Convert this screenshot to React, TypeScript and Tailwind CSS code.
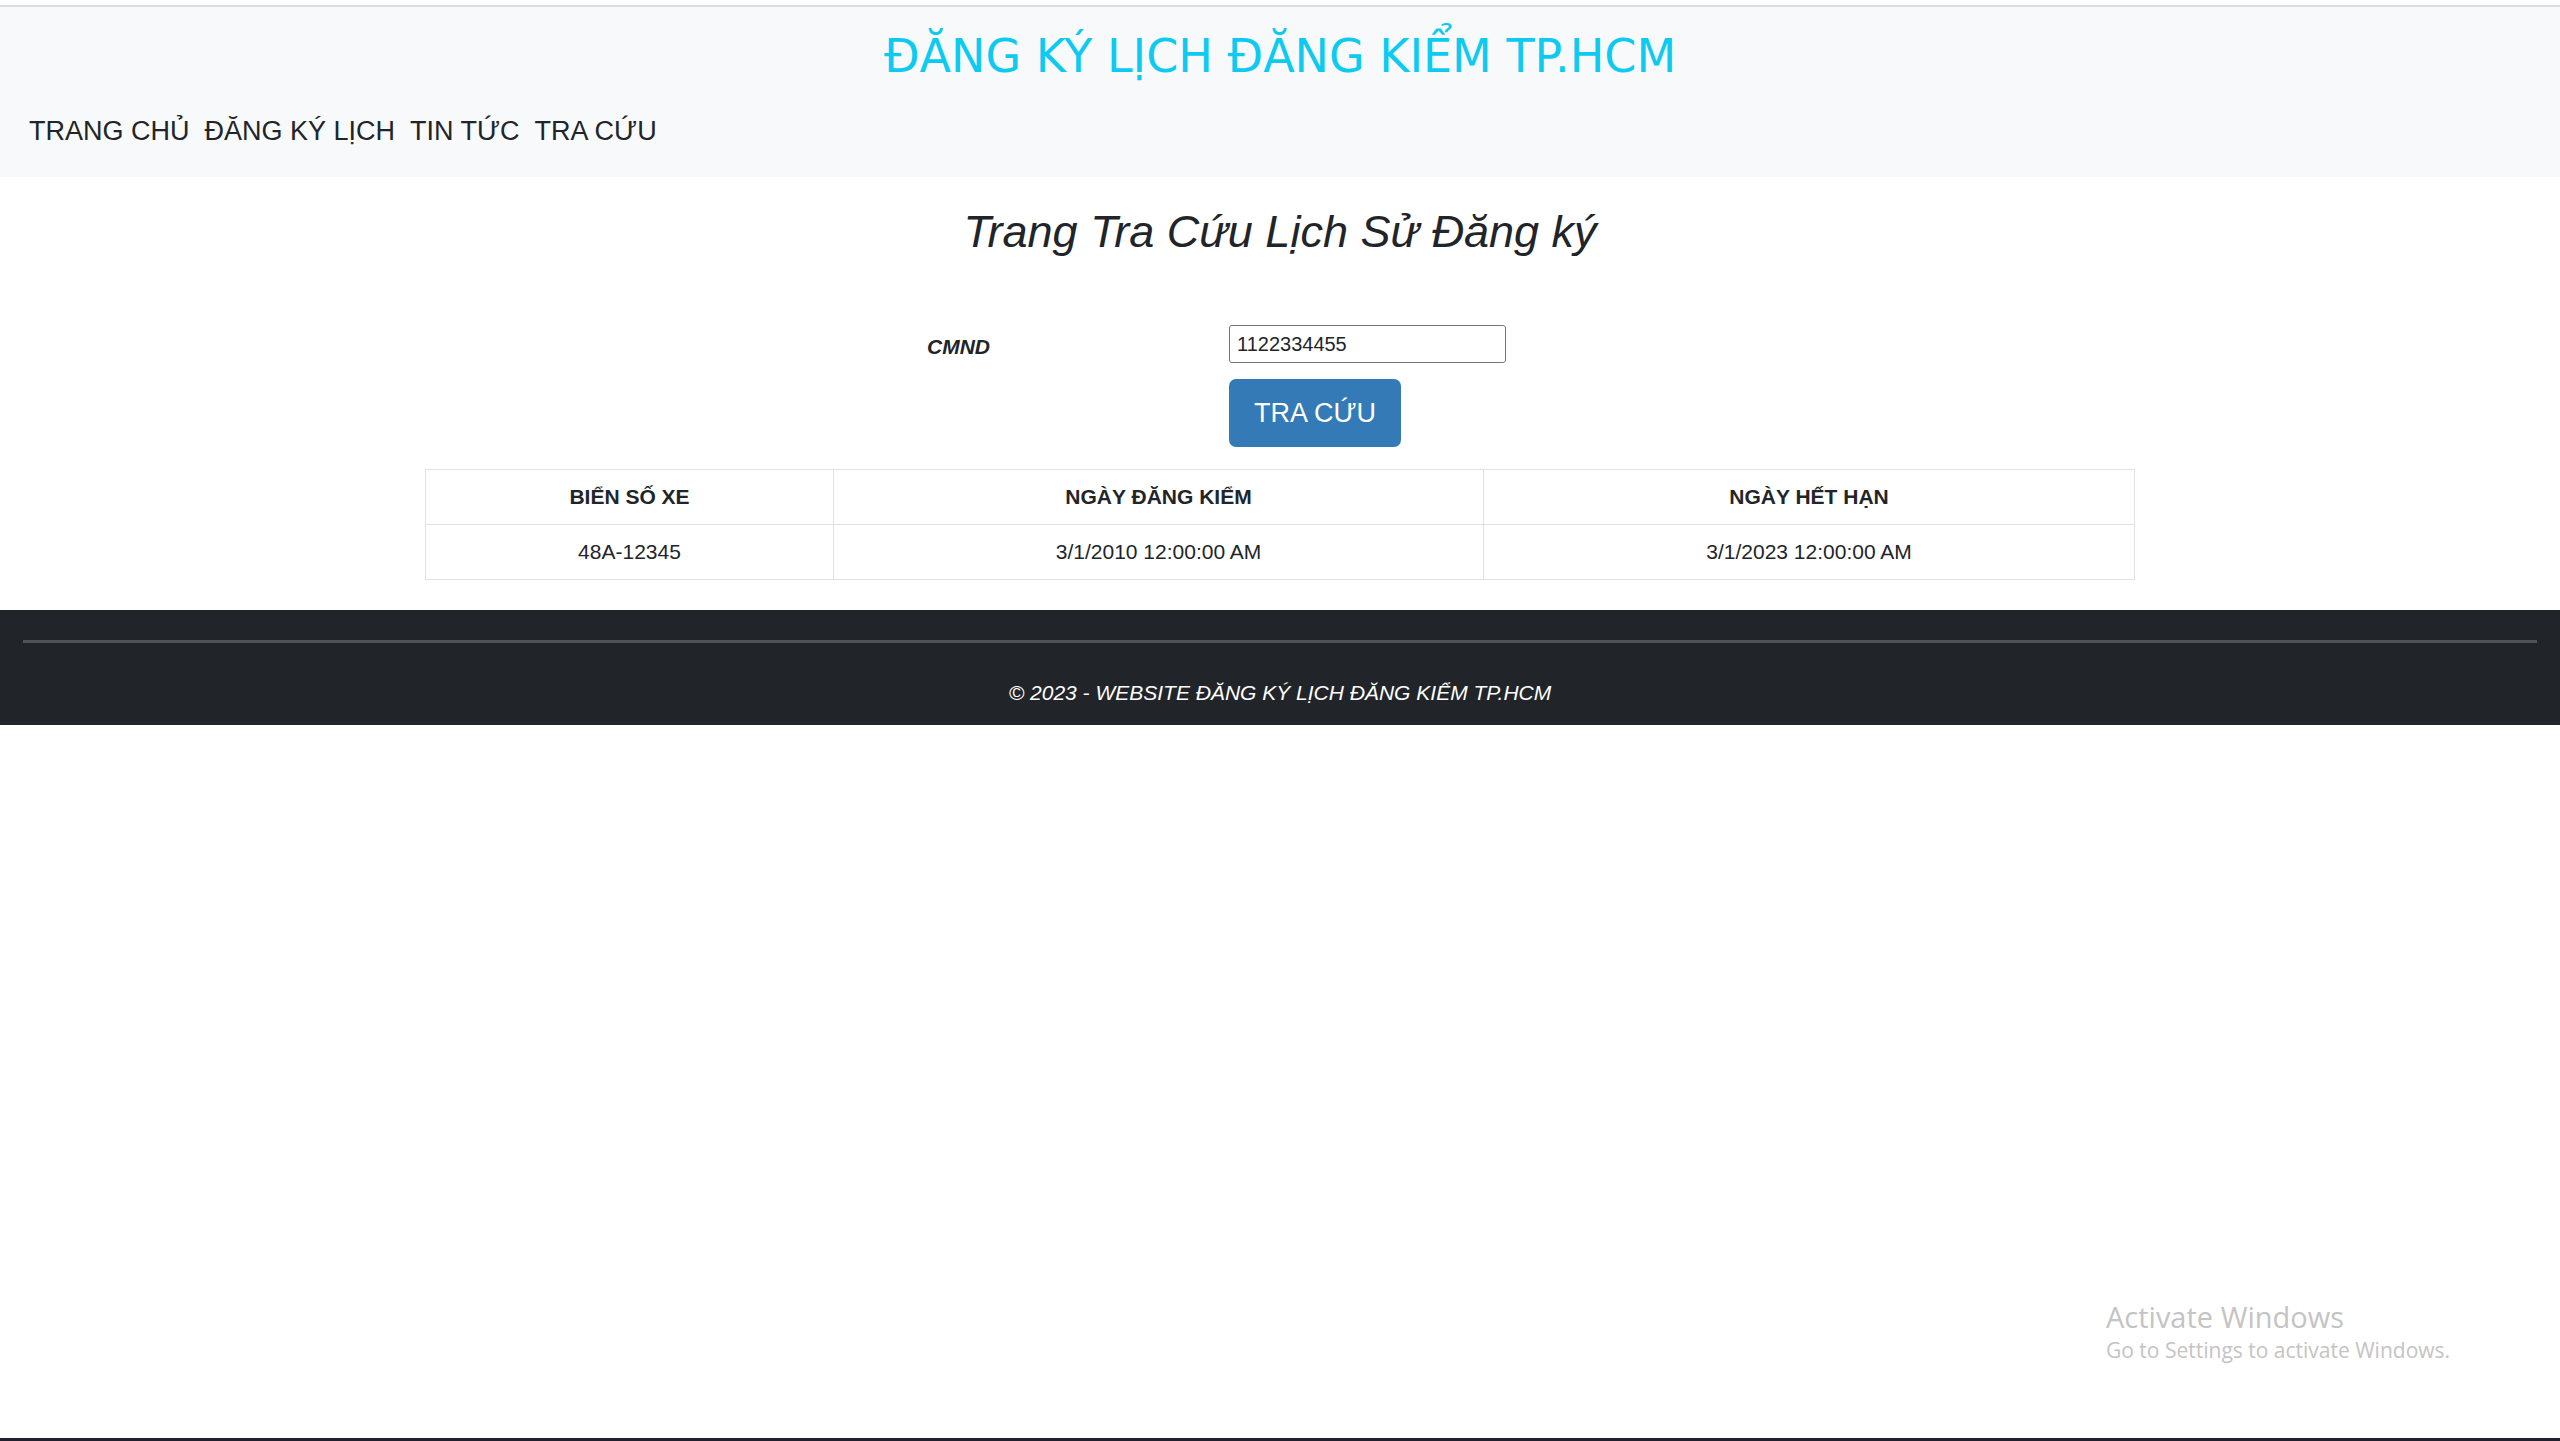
const navItems = ["TRANG CHỦ", "ĐĂNG KÝ LỊCH", "TIN TỨC", "TRA CỨU"];

const history = [
  { plate: "48A-12345", checked: "3/1/2010 12:00:00 AM", expires: "3/1/2023 12:00:00 AM" },
];

function Header() {
  return (
    <header className="mt-[5px] h-[172px] border-t-2 border-[#dcdcdc] bg-[#f8f9fa]">
      <h1 className="pt-[20px] text-center font-['DejaVu_Sans',sans-serif] text-[46px] leading-[58px] text-[#0dcaf0]">
        ĐĂNG KÝ LỊCH ĐĂNG KIỂM TP.HCM
      </h1>
      <nav className="mt-[29px] flex gap-[15px] pl-[29px]">
        {navItems.map((item) => (
          <a key={item} href="#" className="text-[27px] leading-[34px] text-[#212529]">
            {item}
          </a>
        ))}
      </nav>
    </header>
  );
}

function SearchForm() {
  return (
    <div className="mx-auto mt-[66px] w-[706px]">
      <div className="grid grid-cols-[302px_1fr] items-center">
        <label className="pt-[5px] text-[21px] font-bold italic text-[#212529]">CMND</label>
        <input
          defaultValue="1122334455"
          className="h-[38px] w-[277px] rounded-[3px] border border-[#767676] bg-white px-[7px] text-[20px] text-[#212529] outline-none"
        />
        <div />
        <button className="mt-[16px] h-[68px] w-[172px] rounded-[7px] bg-[#337ab7] text-[27px] text-white">
          TRA CỨU
        </button>
      </div>
    </div>
  );
}

function HistoryTable() {
  return (
    <table className="mx-auto mt-[22px] w-[1710px] border-collapse text-[21px] text-[#212529]">
      <thead>
        <tr className="h-[55px]">
          <th className="w-[408px] border border-[#dee2e6] font-bold">BIỂN SỐ XE</th>
          <th className="w-[650px] border border-[#dee2e6] font-bold">NGÀY ĐĂNG KIỂM</th>
          <th className="border border-[#dee2e6] font-bold">NGÀY HẾT HẠN</th>
        </tr>
      </thead>
      <tbody>
        {history.map((row) => (
          <tr key={row.plate} className="h-[55px] text-center">
            <td className="border border-[#dee2e6]">{row.plate}</td>
            <td className="border border-[#dee2e6]">{row.checked}</td>
            <td className="border border-[#dee2e6]">{row.expires}</td>
          </tr>
        ))}
      </tbody>
    </table>
  );
}

function Footer() {
  return (
    <footer className="mt-[30px] h-[115px] bg-[#212529] px-[23px] pt-[30px]">
      <div className="h-[3px] bg-[#4f5357]" />
      <p className="mt-[34px] text-center text-[21px] italic text-white">
        © 2023 - WEBSITE ĐĂNG KÝ LỊCH ĐĂNG KIỂM TP.HCM
      </p>
    </footer>
  );
}

export default function App() {
  return (
    <div className="relative flex min-h-[1441px] flex-col bg-white font-['Liberation_Sans',Arial,sans-serif]">
      <Header />
      <main>
        <h2 className="mt-[28px] text-center text-[45px] italic leading-[54px] text-[#212529]">
          Trang Tra Cứu Lịch Sử Đăng ký
        </h2>
        <SearchForm />
        <HistoryTable />
      </main>
      <Footer />
      <div className="flex-1" />
      <div className="h-[3px] bg-[#1f2130]" />

      <div className="pointer-events-none absolute left-[2106px] top-[1298px] font-['Open_Sans',sans-serif] text-[#c4c4c4]">
        <p className="text-[29px] leading-[38px]">Activate Windows</p>
        <p className="text-[21px] leading-[28px]">Go to Settings to activate Windows.</p>
      </div>
    </div>
  );
}
